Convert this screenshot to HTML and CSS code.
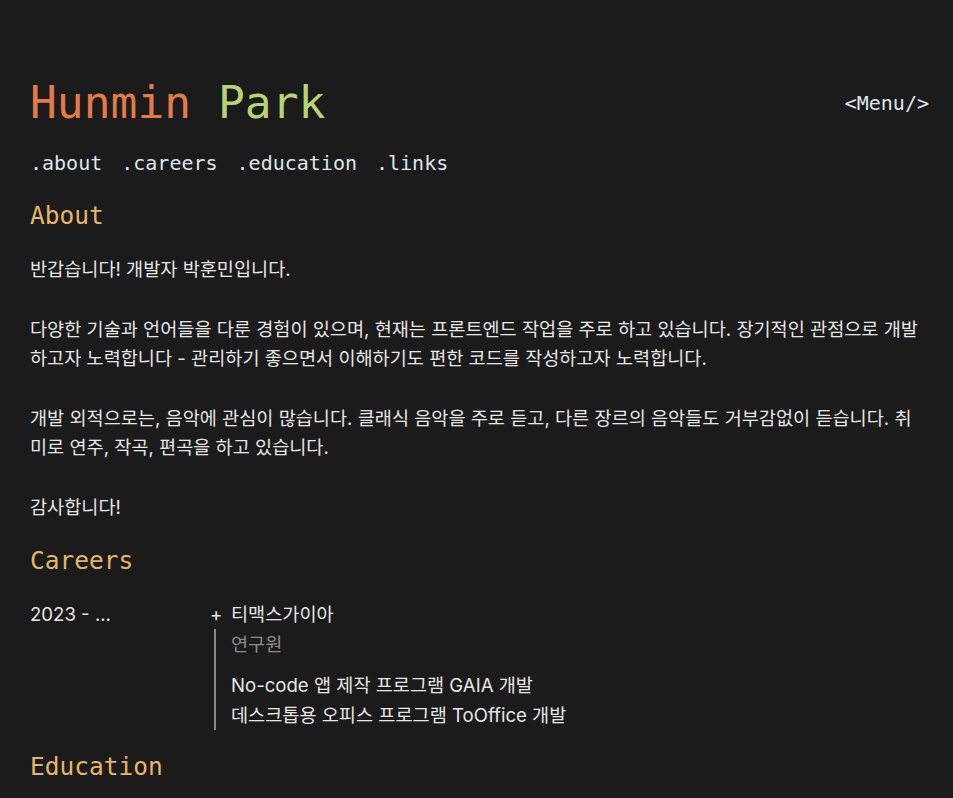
FILE: index.html
```html
<!DOCTYPE html>
<html lang="ko">
<head>
<meta charset="utf-8">
<title>Hunmin Park</title>
<link rel="stylesheet" href="styles.css">
</head>
<body>
<div class="page">
  <header class="header">
    <h1 class="title"><span class="first">Hunmin</span> <span class="last">Park</span></h1>
    <div class="menu">&lt;Menu/&gt;</div>
  </header>
  <nav class="nav">
    <a href="#about">.about</a>
    <a href="#careers">.careers</a>
    <a href="#education">.education</a>
    <a href="#links">.links</a>
  </nav>
  <section class="section about" id="about">
    <h2 class="heading">About</h2>
    <p class="para">반갑습니다! 개발자 박훈민입니다.</p>
    <p class="para">다양한 기술과 언어들을 다룬 경험이 있으며, 현재는 프론트엔드 작업을 주로 하고 있습니다. 장기적인 관점으로 개발하고자 노력합니다 - 관리하기 좋으면서 이해하기도 편한 코드를 작성하고자 노력합니다.</p>
    <p class="para">개발 외적으로는, 음악에 관심이 많습니다. 클래식 음악을 주로 듣고, 다른 장르의 음악들도 거부감없이 듣습니다. 취미로 연주, 작곡, 편곡을 하고 있습니다.</p>
    <p class="para">감사합니다!</p>
  </section>
  <section class="section careers" id="careers">
    <h2 class="heading">Careers</h2>
    <div class="career">
      <div class="period">2023 - ...</div>
      <div class="detail">
        <div class="company"><span class="plus">+</span>티맥스가이아</div>
        <div class="body">
          <div class="role">연구원</div>
          <ul class="tasks">
            <li>No-code 앱 제작 프로그램 GAIA 개발</li>
            <li>데스크톱용 오피스 프로그램 ToOffice 개발</li>
          </ul>
        </div>
      </div>
    </div>
  </section>
  <section class="section education" id="education">
    <h2 class="heading">Education</h2>
  </section>
</div>
</body>
</html>
```
FILE: styles.css
```css
html, body {
  margin: 0;
  background: #1b1b1b;
}
body {
  color: #e6e6e6;
  font-family: Inter, "Noto Sans CJK KR", sans-serif;
  font-size: 18.6px;
}
.page {
  padding: 74px 30px 40px 30px;
}
.header {
  display: flex;
  justify-content: space-between;
  align-items: center;
}
.title {
  margin: 0;
  font-family: "DejaVu Sans Mono", monospace;
  font-weight: normal;
  font-size: 44.6px;
  line-height: 58px;
}
.first { color: #e27b48; }
.last { color: #b6d476; }
.menu {
  margin-right: -6px;
  font-family: "DejaVu Sans Mono", monospace;
  font-size: 20px;
  color: #dfe5ec;
}
.nav {
  display: flex;
  gap: 19px;
  margin-top: 19px;
  font-family: "DejaVu Sans Mono", monospace;
  font-size: 20px;
  line-height: 24px;
}
.nav a {
  color: #dfe5ec;
  text-decoration: none;
}
.heading {
  margin: 0;
  font-family: "DejaVu Sans Mono", monospace;
  font-weight: normal;
  font-size: 24.5px;
  line-height: 32px;
  color: #e6b569;
}
.about .heading { margin-top: 25px; }
.careers .heading { margin-top: 23px; }
.education .heading { margin-top: 21px; }
.para {
  margin: 23px 0 0;
  line-height: 29px;
}
.para + .para {
  margin-top: 31px;
}
.career {
  display: flex;
  margin-top: 22px;
}
.period {
  width: 180px;
  line-height: 30px;
}
.detail {
  flex: 1;
}
.company {
  position: relative;
  padding-left: 21px;
  line-height: 30px;
}
.plus {
  position: absolute;
  left: 0;
  width: 10px;
  text-align: center;
}
.body {
  margin-left: 4px;
  border-left: 2px solid #8a8a8a;
  padding-left: 15px;
}
.role {
  color: #8c8c8c;
  line-height: 30px;
}
.tasks {
  list-style: none;
  margin: 11px 0 0;
  padding: 0;
}
.tasks li {
  line-height: 30px;
}
```
